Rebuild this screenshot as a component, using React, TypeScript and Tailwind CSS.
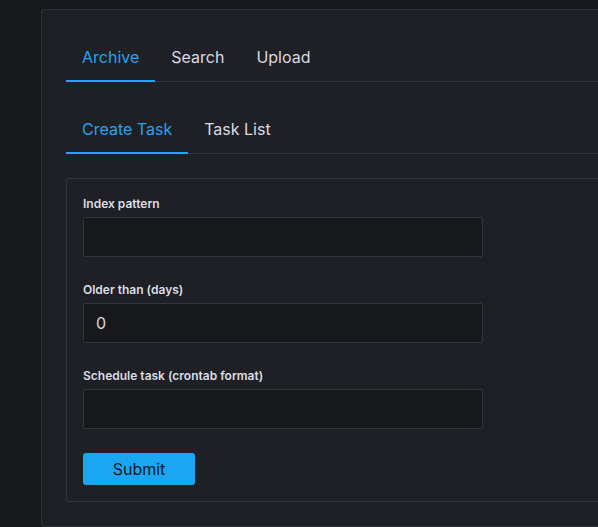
import React from 'react';

const Tab: React.FC<{ label: string; active?: boolean }> = ({ label, active }) => (
  <div
    className={
      'h-12 px-4 flex items-center text-base border-b-2 -mb-px ' +
      (active ? 'text-[#24a3f2] border-[#24a3f2]' : 'text-[#d8dae2] border-transparent')
    }
  >
    {label}
  </div>
);

const Field: React.FC<{ label: string; value?: string }> = ({ label, value }) => (
  <div className="mb-6">
    <label className="block text-xs font-semibold leading-4 pt-px mb-[5px] text-[#dcdee6]">{label}</label>
    <input
      type="text"
      defaultValue={value}
      className="w-[400px] h-10 px-3 text-base text-[#d8dae2] bg-[#18191d] border border-[#34363d] rounded-[2px] outline-none"
    />
  </div>
);

const App: React.FC = () => {
  return (
    <div
      className="h-[527px] w-[598px] overflow-hidden bg-[#17181c] pl-[41px] pt-[9px]"
      style={{ fontFamily: 'Inter, "Noto Sans", sans-serif' }}
    >
      <div className="w-[620px] bg-[#1f2025] border border-[#30323a] rounded-[3px] px-6 pt-6 pb-6">
        <div className="flex border-b border-[#34363d]">
          <Tab label="Archive" active />
          <Tab label="Search" />
          <Tab label="Upload" />
        </div>
        <div className="flex border-b border-[#34363d] mt-6">
          <Tab label="Create Task" active />
          <Tab label="Task List" />
        </div>
        <div className="mt-6 border border-[#34363d] rounded-[3px] p-4">
          <Field label="Index pattern" />
          <Field label="Older than (days)" value="0" />
          <Field label="Schedule task (crontab format)" />
          <button className="w-28 h-8 rounded-[3px] bg-[#1ba6f2] text-[#0e1a29] text-base">Submit</button>
        </div>
      </div>
    </div>
  );
};

export default App;
